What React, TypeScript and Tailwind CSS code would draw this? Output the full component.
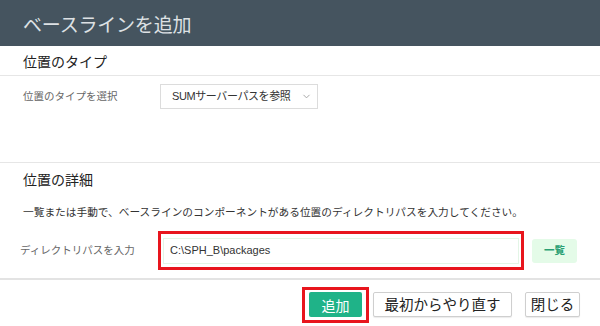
import { ChevronDown } from "lucide-react";

const font = "font-['Noto_Sans_CJK_JP','Liberation_Sans',sans-serif]";

const App = () => {
  return (
    <div className={`w-[600px] h-[326px] bg-white overflow-hidden flex flex-col ${font}`}>
      {/* Header */}
      <div className="h-[46px] bg-[#45545f] flex items-center pl-[23px] shrink-0">
        <span className="text-[19px] text-[#dde1e4] leading-none tracking-[-0.2px]">ベースラインを追加</span>
      </div>

      {/* Location type */}
      <div className="h-[30px] flex items-center pl-[23px] border-b border-[#e6e6e6] shrink-0">
        <span className="text-[14px] text-[#222] leading-none">位置のタイプ</span>
      </div>
      <div className="h-[87px] shrink-0 border-b border-[#e6e6e6] pt-[8px]">
        <div className="flex items-center">
          <span className="w-[160px] pl-[23px] text-[10.5px] text-[#666] leading-none">位置のタイプを選択</span>
          <div className="w-[158px] h-[25px] border border-[#dcdcdc] flex items-center justify-between pl-[11px] pr-[5px]">
            <span className="text-[11px] text-[#333] leading-none font-['Liberation_Sans','Noto_Sans_CJK_JP',sans-serif] tracking-[-0.4px]">SUMサーバーパスを参照</span>
            <ChevronDown size={11} className="text-[#a0a0a0]" strokeWidth={2} />
          </div>
        </div>
      </div>

      {/* Location details */}
      <div className="h-[117px] shrink-0 border-b-2 border-[#e3e3e3] flex flex-col">
        <div className="h-[31px] flex items-center pl-[23px]">
          <span className="text-[14px] text-[#222] leading-none">位置の詳細</span>
        </div>
        <div className="h-[37px] flex items-center pl-[23px]">
          <span className="text-[10.7px] text-[#333] leading-none">
            一覧または手動で、ベースラインのコンポーネントがある位置のディレクトリパスを入力してください。
          </span>
        </div>
        <div className="flex items-center h-[39px]">
          <span className="w-[158px] pl-[20px] text-[10.5px] text-[#666] leading-none">ディレクトリパスを入力</span>
          <div className="w-[366px] h-[39px] border-[3px] border-[#e8151d] p-[2px] flex items-center">
            <div className="w-full h-[26px] border border-[#e3f5e6] flex items-center pl-[6px]">
              <span className="text-[11px] text-[#333] leading-none font-['Liberation_Sans',sans-serif]">C:\SPH_B\packages</span>
            </div>
          </div>
          <div className="ml-[8px] w-[45px] h-[24px] rounded-[3px] bg-[#e4fbe8] flex items-center justify-center">
            <span className="text-[10.5px] text-[#2a9f73] font-bold leading-none">一覧</span>
          </div>
        </div>
      </div>

      {/* Footer */}
      <div className="flex-1 flex items-center justify-end pr-[20px] gap-[4px] pt-[3px]">
        <div className="w-[67px] h-[36px] border-[3px] border-[#e8151d] flex items-center justify-center">
          <div className="w-[53px] h-[25px] rounded-[2px] bg-[#1fb388] flex items-center justify-center">
            <span className="text-[14px] text-white leading-none">追加</span>
          </div>
        </div>
        <div className="w-[139px] h-[25px] rounded-[2px] border border-[#cfcfcf] bg-white shadow-[0_1px_1px_rgba(0,0,0,0.08)] flex items-center justify-center">
          <span className="text-[14.5px] text-[#222] leading-none">最初からやり直す</span>
        </div>
        <div className="ml-[9px] w-[55px] h-[25px] rounded-[2px] border border-[#cfcfcf] bg-white shadow-[0_1px_1px_rgba(0,0,0,0.08)] flex items-center justify-center">
          <span className="text-[14.5px] text-[#222] leading-none">閉じる</span>
        </div>
      </div>
    </div>
  );
};

export default App;
